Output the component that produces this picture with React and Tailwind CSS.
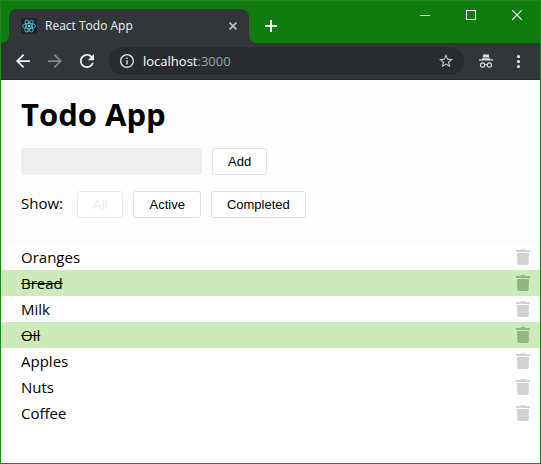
import { useState } from "react";

const FILTERS = ["All", "Active", "Completed"];

const INITIAL_TODOS = [
  { id: 1, text: "Oranges", done: false },
  { id: 2, text: "Bread", done: true },
  { id: 3, text: "Milk", done: false },
  { id: 4, text: "Oil", done: true },
  { id: 5, text: "Apples", done: false },
  { id: 6, text: "Nuts", done: false },
  { id: 7, text: "Coffee", done: false },
];

function ReactLogo() {
  return (
    <svg className="size-4 shrink-0" viewBox="0 0 16 16" fill="none" aria-hidden="true">
      <rect width="16" height="16" rx="1" fill="#20232a" />
      <g stroke="#53b8d4" strokeWidth="0.9">
        <ellipse cx="8" cy="8" rx="6.6" ry="2.6" />
        <ellipse cx="8" cy="8" rx="6.6" ry="2.6" transform="rotate(60 8 8)" />
        <ellipse cx="8" cy="8" rx="6.6" ry="2.6" transform="rotate(120 8 8)" />
      </g>
      <circle cx="8" cy="8" r="1.3" fill="#61dafb" />
    </svg>
  );
}

function WindowButton({ label, children }) {
  return (
    <button type="button" aria-label={label} className="flex h-7 w-[46px] items-center justify-center">
      <svg width="10" height="10" viewBox="0 0 10 10" fill="none" stroke="#fff" aria-hidden="true">
        {children}
      </svg>
    </button>
  );
}

function TitleBar() {
  return (
    <div className="flex h-[42px] bg-[#107c10]">
      <span className="size-2 self-end bg-[#323639]">
        <span className="block size-2 rounded-br-lg bg-[#107c10]" />
      </span>
      <div className="mt-2 flex w-60 items-center rounded-t-lg bg-[#323639] pr-3 pl-3">
        <ReactLogo />
        <span className="ml-2 flex-1 font-['Open_Sans',sans-serif] text-[12px] leading-4 text-[#f1f3f4]">
          React Todo App
        </span>
        <button type="button" aria-label="Close tab">
          <svg width="8" height="8" viewBox="0 0 8 8" stroke="#bdc1c6" strokeWidth="1.6" aria-hidden="true">
            <path d="M0.5 0.5L7.5 7.5M7.5 0.5L0.5 7.5" />
          </svg>
        </button>
      </div>
      <span className="size-2 self-end bg-[#323639]">
        <span className="block size-2 rounded-bl-lg bg-[#107c10]" />
      </span>
      <button type="button" aria-label="New tab" className="mt-2 ml-2 flex items-center">
        <svg width="12" height="12" viewBox="0 0 12 12" fill="#fff" aria-hidden="true">
          <path d="M5 0h2v5h5v2H7v5H5V7H0V5h5z" />
        </svg>
      </button>
      <div className="ml-auto flex">
        <WindowButton label="Minimize">
          <path d="M0 5.5H10" />
        </WindowButton>
        <WindowButton label="Maximize">
          <rect x="0.5" y="0.5" width="9" height="9" />
        </WindowButton>
        <WindowButton label="Close">
          <path d="M0 0L10 10M10 0L0 10" strokeWidth="1.1" />
        </WindowButton>
      </div>
    </div>
  );
}

function ToolBar() {
  return (
    <div className="flex h-[37px] items-center border-b border-[#28292b] bg-[#323639] pr-5 pl-[15px] text-[#f1f3f4]">
      <div className="flex shrink-0 gap-[18px]">
        <button type="button" aria-label="Back">
          <svg width="14" height="14" viewBox="4 4 16 16" fill="currentColor" aria-hidden="true">
            <path d="M20 11H7.83l5.59-5.59L12 4l-8 8 8 8 1.41-1.41L7.83 13H20v-2z" />
          </svg>
        </button>
        <button type="button" aria-label="Forward" className="text-[#85878a]">
          <svg width="14" height="14" viewBox="4 4 16 16" fill="currentColor" aria-hidden="true">
            <path d="M12 4l-1.41 1.41L16.17 11H4v2h12.17l-5.58 5.59L12 20l8-8z" />
          </svg>
        </button>
        <button type="button" aria-label="Reload">
          <svg width="14" height="14" viewBox="4 4 16 16" fill="currentColor" aria-hidden="true">
            <path d="M17.65 6.35C16.2 4.9 14.21 4 12 4c-4.42 0-7.99 3.58-7.99 8s3.57 8 7.99 8c3.73 0 6.84-2.55 7.73-6h-2.08c-.82 2.33-3.04 4-5.65 4-3.31 0-6-2.69-6-6s2.69-6 6-6c1.66 0 3.14.69 4.22 1.78L13 11h7V4l-2.35 2.35z" />
          </svg>
        </button>
      </div>
      <div className="ml-[15px] flex h-7 flex-1 items-center rounded-full bg-[#282c2f] pr-[11px] pl-[11px]">
        <button type="button" aria-label="Site information">
          <svg width="14" height="14" viewBox="2 2 20 20" fill="#dadce0" aria-hidden="true">
            <path d="M11 7h2v2h-2zm0 4h2v6h-2zm1-9C6.48 2 2 6.48 2 12s4.48 10 10 10 10-4.48 10-10S17.52 2 12 2zm0 18c-4.41 0-8-3.59-8-8s3.59-8 8-8 8 3.59 8 8-3.59 8-8 8z" />
          </svg>
        </button>
        <div className="ml-[9px] flex-1 font-['Open_Sans',sans-serif] text-[13px] leading-5 text-[#9aa0a6]">
          <span className="text-white">localhost</span>:3000
        </div>
        <button type="button" aria-label="Bookmark this page">
          <svg width="14" height="14" viewBox="2 2 20 20" fill="#c4c7ca" aria-hidden="true">
            <path d="M22 9.24l-7.19-.62L12 2 9.19 8.63 2 9.24l5.46 4.73L5.82 21 12 17.27 18.18 21l-1.63-7.03L22 9.24zM12 15.4l-3.76 2.27 1-4.28-3.32-2.88 4.38-.38L12 6.1l1.71 4.04 4.38.38-3.32 2.88 1 4.28L12 15.4z" />
          </svg>
        </button>
      </div>
      <button type="button" aria-label="Incognito" className="ml-[15px] shrink-0">
        <svg width="14" height="14" viewBox="0 0 14 14" fill="#dadce0" aria-hidden="true">
          <path d="M4.3 0.3L5.6 0.6H8.4L9.7 0.3L10.3 3.5H3.7z" />
          <path d="M3.5 4.3H10.5L11 5.2H14V6.4H0V5.2H3z" />
          <g fill="none" stroke="#dadce0" strokeWidth="1.1">
            <circle cx="3.6" cy="11" r="2.1" />
            <circle cx="10.4" cy="11" r="2.1" />
            <path d="M5.7 10.7Q7 9.9 8.3 10.7" />
          </g>
        </svg>
      </button>
      <button type="button" aria-label="Menu" className="ml-6 shrink-0">
        <svg width="3" height="13" viewBox="0 0 3 13" fill="currentColor" aria-hidden="true">
          <circle cx="1.5" cy="1.5" r="1.5" />
          <circle cx="1.5" cy="6.5" r="1.5" />
          <circle cx="1.5" cy="11.5" r="1.5" />
        </svg>
      </button>
    </div>
  );
}

function Button(props) {
  return (
    <button
      {...props}
      className="h-[27px] rounded-[3px] border border-[#e1e1e1] bg-white px-[15px] font-['Liberation_Sans',Arial,sans-serif] text-[13px] leading-4 text-black disabled:border-[#e9e9e9] disabled:text-[#e9e9e9]"
    />
  );
}

function TodoRow({ todo, onToggle, onRemove }) {
  return (
    <li className={todo.done ? "flex h-[26px] items-center bg-[#cbebbb] pr-[10px] pl-5" : "flex h-[26px] items-center pr-[10px] pl-5"}>
      <button type="button" onClick={onToggle} className={todo.done ? "flex-1 text-left line-through" : "flex-1 text-left"}>
        {todo.text}
      </button>
      <button type="button" aria-label={"Delete " + todo.text} onClick={onRemove} className={todo.done ? "text-[#91b781]" : "text-[#d2d2d2]"}>
        <svg width="14" height="16" viewBox="0 0 14 16" fill="currentColor" aria-hidden="true">
          <path d="M4.5 1L5.2 0H8.8L9.5 1H14V3H0V1z" />
          <path d="M1 4H13L12.6 14.8Q12.5 16 11.3 16H2.7Q1.5 16 1.4 14.8z" />
        </svg>
      </button>
    </li>
  );
}

export default function App() {
  const [todos, setTodos] = useState(INITIAL_TODOS);
  const [filter, setFilter] = useState("All");
  const [draft, setDraft] = useState("");

  const visible = todos.filter((t) => filter === "All" || (filter === "Completed") === t.done);

  const addTodo = (event) => {
    event.preventDefault();
    const text = draft.trim();
    if (!text) return;
    setTodos([...todos, { id: Date.now(), text, done: false }]);
    setDraft("");
  };

  return (
    <div className="flex min-h-screen flex-col border border-[#228522] bg-white">
      <TitleBar />
      <ToolBar />
      <main className="font-['Open_Sans',sans-serif] text-[15px] leading-5 text-black">
        <header className="bg-[#fdfdfd] px-5 pt-3 pb-[26px]">
          <h1 className="text-[31px] leading-11 font-bold">Todo App</h1>
          <form onSubmit={addTodo} className="mt-3 flex gap-[10px]">
            <input
              type="text"
              aria-label="New todo"
              value={draft}
              onChange={(event) => setDraft(event.target.value)}
              className="h-[27px] w-[181px] rounded-[3px] bg-[#eee] px-2 outline-none"
            />
            <Button type="submit">Add</Button>
          </form>
          <div className="mt-4 flex items-baseline gap-[10px]">
            <span className="mr-1">Show:</span>
            {FILTERS.map((name) => (
              <Button key={name} type="button" disabled={name === filter} onClick={() => setFilter(name)}>
                {name}
              </Button>
            ))}
          </div>
        </header>
        <ul>
          {visible.map((todo) => (
            <TodoRow
              key={todo.id}
              todo={todo}
              onToggle={() => setTodos(todos.map((t) => (t.id === todo.id ? { ...t, done: !t.done } : t)))}
              onRemove={() => setTodos(todos.filter((t) => t.id !== todo.id))}
            />
          ))}
        </ul>
      </main>
    </div>
  );
}
